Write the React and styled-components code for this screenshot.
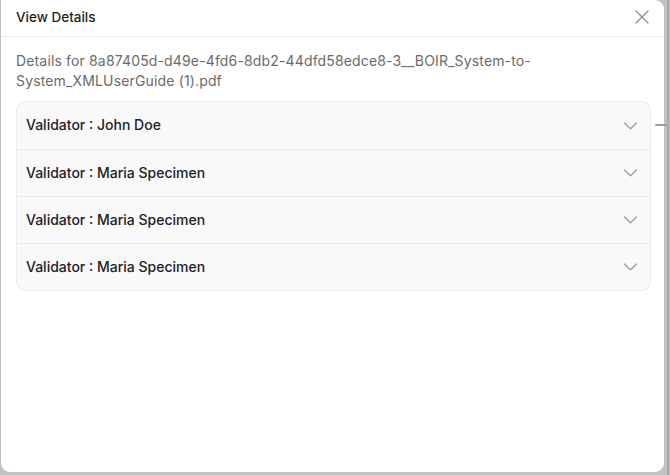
import React from "react";
import styled, { createGlobalStyle } from "styled-components";

const Global = createGlobalStyle`
  html, body { margin: 0; padding: 0; }
  body {
    background: #c2c2c2;
    font-family: "Inter", "Noto Sans", sans-serif;
    width: 670px;
    height: 475px;
    overflow: hidden;
  }
`;

const Stage = styled.div`
  display: flex;
  height: 475px;
  position: relative;
`;

const Modal = styled.div`
  margin-left: 1px;
  width: 663px;
  height: 472px;
  background: #fff;
  border-radius: 0 9px 9px 9px;
  display: flex;
  flex-direction: column;
  box-sizing: border-box;
`;

const Edge = styled.div`
  width: 6px;
  display: flex;
  justify-content: center;
  &::after {
    content: "";
    width: 2px;
    margin-left: 1px;
    background: #a9a9a9;
    height: 100%;
  }
`;

const Tick = styled.div`
  position: absolute;
  left: 655px;
  top: 124px;
  width: 12px;
  height: 2px;
  background: #9e9e9e;
  border-radius: 1px;
`;

const Header = styled.div`
  height: 37px;
  display: flex;
  align-items: center;
  justify-content: space-between;
  padding: 0 14px 0 15px;
  border-bottom: 1px solid #ececec;
  box-sizing: border-box;
`;

const Title = styled.div`
  font-size: 13.5px;
  font-weight: 500;
  color: #1f1f1f;
  margin-top: -3px;
`;

const CloseBtn = styled.button`
  border: 0;
  background: none;
  padding: 0;
  width: 16px;
  height: 16px;
  display: flex;
  align-items: center;
  justify-content: center;
  margin-top: -3px;
  cursor: pointer;
`;

const Body = styled.div`
  padding: 14px 13px 0 15px;
  display: flex;
  flex-direction: column;
  gap: 10px;
`;

const Desc = styled.p`
  margin: 0;
  font-size: 14px;
  line-height: 20px;
  color: #6b6b6b;
  letter-spacing: 0.15px;
  padding-right: 90px;
`;

const Accordion = styled.div`
  border: 1px solid #ececf0;
  border-radius: 9px;
  background: #f9f9fa;
  overflow: hidden;
`;

const Row = styled.div`
  height: 47px;
  display: flex;
  align-items: center;
  justify-content: space-between;
  padding: 0 12px 0 9px;
  box-sizing: border-box;
  border-top: ${(p) => (p.$first ? "none" : "1.5px solid #ebebf0")};
`;

const RowTitle = styled.span`
  font-size: 14px;
  font-weight: 500;
  color: #222;
  margin-top: -2px;
`;

const Chevron = () => (
  <svg width="15" height="10" viewBox="0 0 15 10" fill="none">
    <path d="M1.5 2 L7.5 7.8 L13.5 2" stroke="#9a9a9a" strokeWidth="1.2" strokeLinecap="round" strokeLinejoin="round" />
  </svg>
);

const rows = ["John Doe", "Maria Specimen", "Maria Specimen", "Maria Specimen"];

export default function App() {
  return (
    <>
      <Global />
      <Stage>
        <Modal>
          <Header>
            <Title>View Details</Title>
            <CloseBtn aria-label="Close">
              <svg width="14" height="14" viewBox="0 0 14 14">
                <path d="M1 1 L13 13 M13 1 L1 13" stroke="#8a8a8a" strokeWidth="1.2" strokeLinecap="round" />
              </svg>
            </CloseBtn>
          </Header>
          <Body>
            <Desc>
              Details for 8a87405d-d49e-4fd6-8db2-44dfd58edce8-3__BOIR_System-to-System_XMLUserGuide (1).pdf
            </Desc>
            <Accordion>
              {rows.map((name, i) => (
                <Row key={i} $first={i === 0}>
                  <RowTitle>Validator : {name}</RowTitle>
                  <Chevron />
                </Row>
              ))}
            </Accordion>
          </Body>
        </Modal>
        <Edge />
        <Tick />
      </Stage>
    </>
  );
}
